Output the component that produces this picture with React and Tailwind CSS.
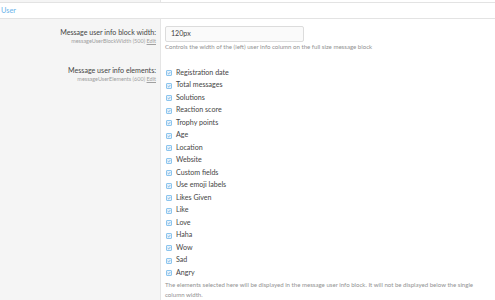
import React from 'react';

const ELEMENTS = [
  'Registration date',
  'Total messages',
  'Solutions',
  'Reaction score',
  'Trophy points',
  'Age',
  'Location',
  'Website',
  'Custom fields',
  'Use emoji labels',
  'Likes Given',
  'Like',
  'Love',
  'Haha',
  'Wow',
  'Sad',
  'Angry',
];

function Check() {
  return (
    <span className="flex h-[6px] w-[6px] shrink-0 items-center justify-center rounded-[1px] border border-[#8cc5ee] bg-[#e7f2fb]">
      <svg viewBox="0 0 6 6" className="h-[4px] w-[4px]">
        <path d="M1 3.2 L2.4 4.5 L5 1.6" fill="none" stroke="#3f93d3" strokeWidth="0.9" />
      </svg>
    </span>
  );
}

function Hint({ name }) {
  return (
    <div className="text-[5.5px] leading-[7px] text-[#a0a0a0]">
      {name} <span className="underline">Edit</span>
    </div>
  );
}

export default function App() {
  return (
    <div
      className="h-[300px] w-[495px] overflow-hidden bg-white text-[#454545]"
      style={{ fontFamily: 'Lato, "Open Sans", sans-serif' }}
    >
      <div className="flex h-[2px]">
        <div className="w-[160px] bg-[#f5f5f5]" />
        <div className="flex-1 border-l border-[#e5e5e5]" />
      </div>
      <div className="flex h-[17px] items-center border-y border-[#e3e3e3] px-[1px] text-[7.4px] text-[#6ab4ea]">
        User
      </div>

      <div className="flex">
        <div className="w-[160px] shrink-0 bg-[#f5f5f5] pr-[4px] text-right">
          <div className="pt-[9px] text-[7.1px] leading-[10px]">Message user info block width:</div>
          <Hint name="messageUserBlockWidth (500)" />
          <div className="pt-[21px] text-[7.1px] leading-[10px]">Message user info elements:</div>
          <Hint name="messageUserElements (600)" />
          <div className="h-[300px]" />
        </div>
        <div className="flex-1 border-l border-[#e5e5e5] pl-[4px]">
          <div className="pt-[7px]">
            <div className="flex h-[16px] w-[139px] items-center rounded-[2px] border border-[#dcdcdc] bg-[#fafafa] px-[5px] text-[7.1px]">
              120px
            </div>
            <div className="mt-[1px] text-[6.1px] leading-[8px] text-[#929292]">
              Controls the width of the (left) user info column on the full size message block
            </div>
          </div>
          <div className="pt-[16px]">
            {ELEMENTS.map((e) => (
              <div key={e} className="flex h-[12.5px] items-center gap-[4px] pl-[1px] text-[7.1px]">
                <Check />
                <span>{e}</span>
              </div>
            ))}
            <div className="w-[318px] text-[6.1px] leading-[10px] text-[#929292]">
              The elements selected here will be displayed in the message user info block. It will not be displayed below the single column width.
            </div>
          </div>
        </div>
      </div>
    </div>
  );
}
